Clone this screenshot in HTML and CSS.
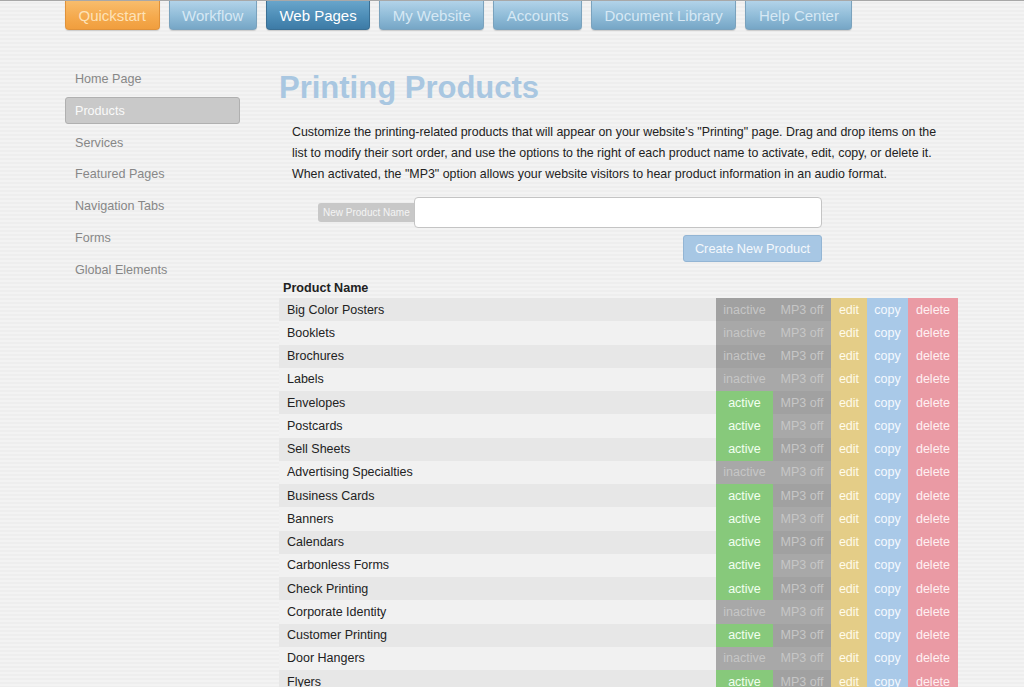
FILE: index.html
```html
<!DOCTYPE html>
<html>
<head>
<meta charset="utf-8">
<link rel="stylesheet" href="styles.css">
</head>
<body>
<nav class="tabs">
  <a class="tab tab-orange">Quickstart</a>
  <a class="tab">Workflow</a>
  <a class="tab tab-active">Web Pages</a>
  <a class="tab">My Website</a>
  <a class="tab">Accounts</a>
  <a class="tab">Document Library</a>
  <a class="tab">Help Center</a>
</nav>
<div class="layout">
  <aside class="side">
    <a class="side-item">Home Page</a>
    <a class="side-item side-current">Products</a>
    <a class="side-item">Services</a>
    <a class="side-item">Featured Pages</a>
    <a class="side-item">Navigation Tabs</a>
    <a class="side-item">Forms</a>
    <a class="side-item">Global Elements</a>
  </aside>
  <main class="main">
    <h1 class="title">Printing Products</h1>
    <p class="intro">Customize the printing-related products that will appear on your website's "Printing" page. Drag and drop items on the list to modify their sort order, and use the options to the right of each product name to activate, edit, copy, or delete it. When activated, the "MP3" option allows your website visitors to hear product information in an audio format.</p>
    <div class="newrow">
      <span class="newlabel">New Product Name</span>
      <input class="newinput" type="text">
    </div>
    <div class="btnrow"><button class="createbtn">Create New Product</button></div>
    <div class="thead">Product Name</div>
    <div class="rows" id="rows"></div>
  </main>
</div>
<script src="app.js"></script>
</body>
</html>
```
FILE: app.js
```js
var items = [
  ["Big Color Posters", 0], ["Booklets", 0], ["Brochures", 0], ["Labels", 0],
  ["Envelopes", 1], ["Postcards", 1], ["Sell Sheets", 1], ["Advertising Specialties", 0],
  ["Business Cards", 1], ["Banners", 1], ["Calendars", 1], ["Carbonless Forms", 1],
  ["Check Printing", 1], ["Corporate Identity", 0], ["Customer Printing", 1],
  ["Door Hangers", 0], ["Flyers", 1]
];
var html = "";
items.forEach(function (it) {
  html += '<div class="row"><span class="pname">' + it[0] + '</span>' +
    '<span class="act ' + (it[1] ? 'c-active">active' : 'c-inactive">inactive') + '</span>' +
    '<span class="act c-mp3">MP3 off</span>' +
    '<span class="act c-edit">edit</span>' +
    '<span class="act c-copy">copy</span>' +
    '<span class="act c-delete">delete</span></div>';
});
document.getElementById("rows").innerHTML = html;
```
FILE: styles.css
```css
html, body {
  margin: 0;
  padding: 0;
}
body {
  font-family: "Liberation Sans", Arial, sans-serif;
  background: repeating-linear-gradient(to bottom, #f3f3f3 0, #f3f3f3 2px, #eeeeee 2px, #eeeeee 4px);
  border-top: 1px solid #a8a8a8;
  height: 686px;
  overflow: hidden;
  color: #222;
}
.tabs {
  display: flex;
  gap: 9px;
  padding-left: 65px;
  margin-top: -1px;
  height: 30px;
}
.tab {
  display: block;
  height: 30px;
  line-height: 31px;
  padding: 0 12.5px;
  font-size: 15px;
  color: #d6e8f4;
  background: linear-gradient(to bottom, #b4d4ea 0%, #90bcd8 55%, #76a6c6 100%);
  border: 1px solid #7aa2bd;
  border-top: none;
  border-radius: 0 0 4px 4px;
  box-sizing: border-box;
  box-shadow: 0 1px 1px rgba(0,0,0,0.15);
}
.tab-orange {
  background: linear-gradient(to bottom, #f8be6e 0%, #f5a94c 60%, #f09e3e 100%);
  border-color: #e0923a;
  color: #fde2b8;
}
.tab-active {
  background: linear-gradient(to bottom, #6aa6cc 0%, #4c8cb6 60%, #3d7ba6 100%);
  border-color: #3a6f94;
  color: #ffffff;
}
.layout {
  display: flex;
  padding-left: 65px;
  gap: 39px;
}
.side {
  width: 175px;
  display: flex;
  flex-direction: column;
  gap: 4.8px;
  padding-top: 35px;
}
.side-item {
  display: block;
  height: 27px;
  line-height: 27px;
  padding-left: 9px;
  font-size: 12.6px;
  color: #878787;
  border: 1px solid transparent;
  border-radius: 3px;
  box-sizing: border-box;
}
.side-current {
  background: #c9c9c9;
  border-color: #b0b0b0;
  color: #fafafa;
}
.main {
  width: 679px;
  padding-top: 40px;
}
.title {
  margin: 0 0 16px 0;
  font-size: 31px;
  line-height: 36px;
  font-weight: bold;
  color: #a9c7e1;
}
.intro {
  margin: 0 0 12px 13px;
  font-size: 12.4px;
  line-height: 21px;
  color: #222;
  width: 660px;
}
.newrow {
  display: flex;
  align-items: center;
  margin-left: 39px;
}
.newlabel {
  display: block;
  height: 19px;
  line-height: 19px;
  padding: 0 4px 0 5px;
  background: #c8c8c8;
  color: #f4f4f4;
  font-size: 10px;
  border-radius: 3px 0 0 3px;
}
.newinput {
  width: 408px;
  height: 31px;
  box-sizing: border-box;
  border: 1px solid #c4c4c4;
  border-radius: 4px;
  background: #fff;
  margin: 0;
}
.btnrow {
  display: flex;
  justify-content: flex-end;
  padding-right: 136px;
  margin-top: 7px;
}
.createbtn {
  height: 27px;
  width: 139px;
  padding: 0;
  font-family: "Liberation Sans", Arial, sans-serif;
  font-size: 12.8px;
  color: #f4f8fc;
  background: #a7c7e4;
  border: 1px solid #93b5d4;
  border-radius: 3px;
}
.thead {
  margin-top: 17px;
  padding-left: 4px;
  font-size: 12.6px;
  font-weight: bold;
  line-height: 19px;
  height: 19px;
  color: #222;
}
.rows {
  display: flex;
  flex-direction: column;
}
.row {
  display: flex;
  height: 23.25px;
  font-size: 12.5px;
  background: #e7e7e7;
}
.row:nth-child(even) {
  background: #f1f1f1;
}
.pname, .act {
  display: block;
  box-sizing: border-box;
  padding-top: 1.5px;
  line-height: 21.75px;
}
.pname {
  flex: 1;
  padding-left: 8px;
  color: #222;
}
.act {
  text-align: center;
  font-size: 12.5px;
}
.c-inactive, .c-active { width: 57px; }
.c-mp3 { width: 58px; }
.c-edit { width: 36px; }
.c-copy { width: 41px; }
.c-delete { width: 50px; }
.c-inactive, .c-mp3 {
  background: rgba(0,0,0,0.3);
  color: #c6c6c6;
}
.c-active {
  background: #87c97b;
  color: #f2fff0;
}
.c-edit {
  background: #e4cd87;
  color: #fffbea;
}
.c-copy {
  background: #a9c9e8;
  color: #f5f9ff;
}
.c-delete {
  background: #ea9aa4;
  color: #fff0f2;
}
```
